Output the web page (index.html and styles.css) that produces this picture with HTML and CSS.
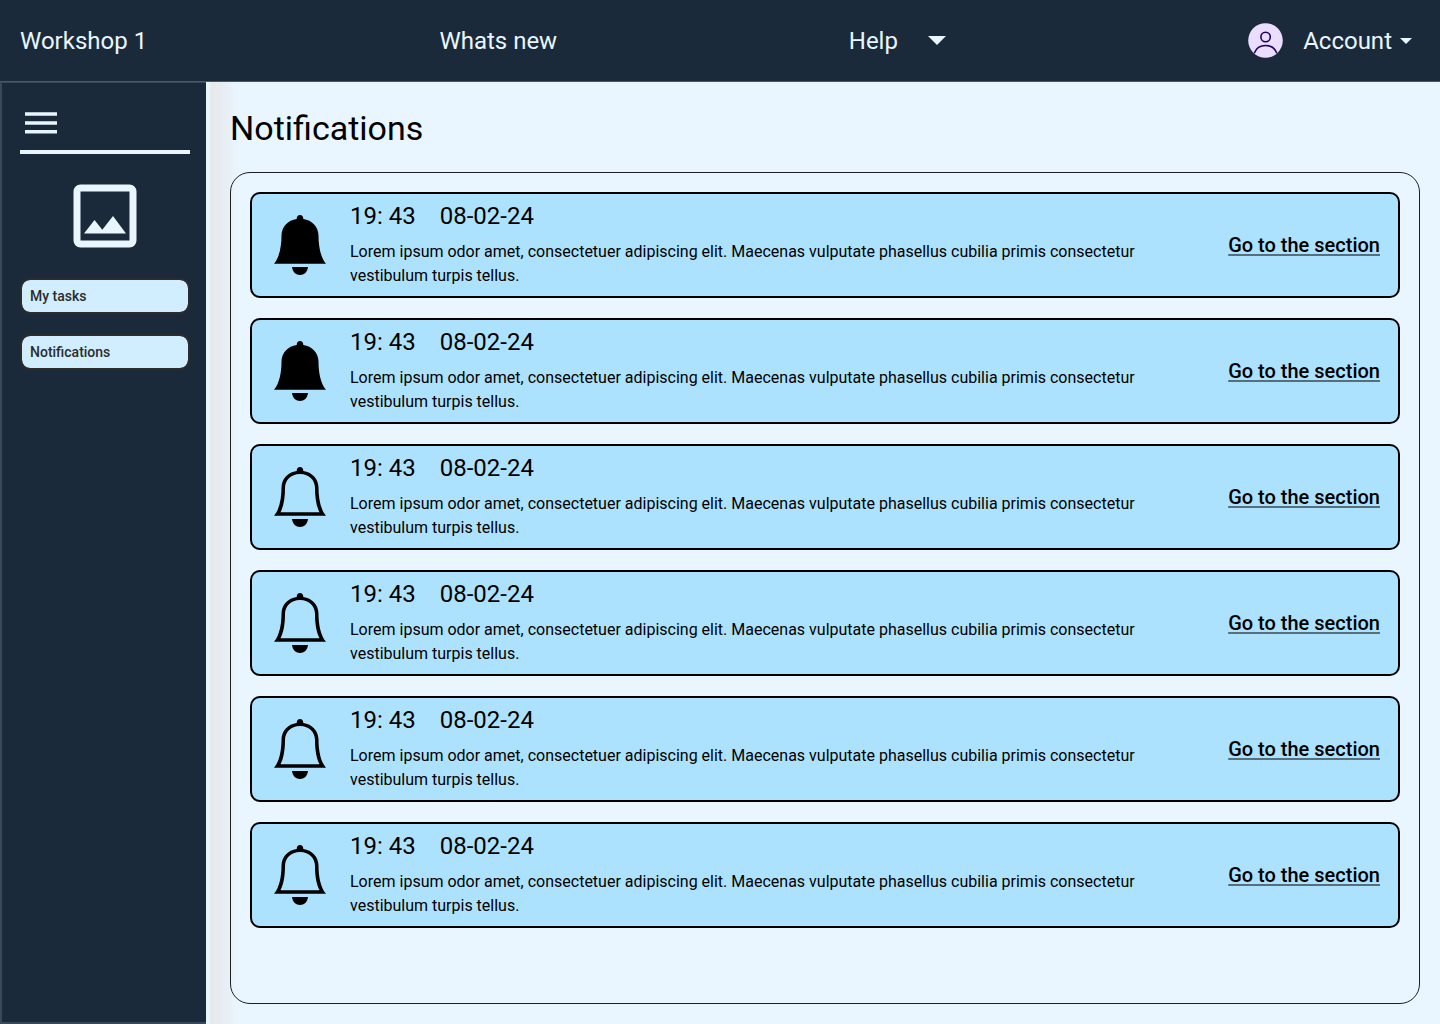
FILE: index.html
```html
<!DOCTYPE html>
<html lang="en">
<head>
<meta charset="utf-8">
<meta name="viewport" content="width=device-width, initial-scale=1">
<title>Notifications</title>
<link rel="stylesheet" href="styles.css">
</head>
<body>
<svg class="sprite" aria-hidden="true">
  <symbol id="bell-solid" viewBox="0 0 52 60">
    <path d="M22.7 4C22.7 1.500 24 0 26 0s3.300 1.500 3.300 4C38 5 44.500 12 44.500 20.500C44.500 31 46.500 42.500 52 48.700H0C5.500 42.500 7.500 31 7.500 20.500C7.500 12 14 5 22.700 4z"/>
    <path d="M18 52h16c-.5 5-4 8-8 8s-7.500-3-8-8z"/>
  </symbol>
  <symbol id="bell-outline" viewBox="0 0 52 60">
    <path fill-rule="evenodd" d="M22.700 4C22.700 1.500 24 0 26 0s3.300 1.500 3.300 4C38 5 44.500 12 44.500 20.500C44.500 31 46.500 42.500 52 48.700H0C5.500 42.500 7.500 31 7.500 20.500C7.500 12 14 5 22.700 4zM26 7C16.500 7 11 13.500 11 21C11 30 9.800 39 6.500 45.200H45.500C42.200 39 41 30 41 21C41 13.500 35.500 7 26 7z"/>
    <path d="M18 52h16c-.5 5-4 8-8 8s-7.500-3-8-8z"/>
  </symbol>
</svg>

<header class="topbar">
  <a class="topbar-link" href="#">Workshop 1</a>
  <a class="topbar-link" href="#">Whats new</a>
  <button class="menu-button help" type="button">Help
    <svg class="caret-large" viewBox="0 0 18 9" aria-hidden="true"><path d="M0 0h18L9 9z"/></svg>
  </button>
  <button class="menu-button account" type="button">
    <svg class="avatar" viewBox="0 0 35 35" aria-hidden="true">
      <circle cx="17.500" cy="17.500" r="17.300" fill="#eaddff"/>
      <g fill="none" stroke="#21005d" stroke-width="1.600">
        <circle cx="17.600" cy="14" r="4.700"/>
        <path d="M6.200 30.300C8 25.500 12.300 22.500 17.500 22.500S27 25.500 28.800 30.300"/>
      </g>
    </svg>
    <span>Account</span>
    <svg class="caret" viewBox="0 0 12 6" aria-hidden="true"><path d="M0 0h12L6 6z"/></svg>
  </button>
</header>

<div class="layout">
  <aside class="sidebar">
    <div class="sidebar-head">
      <button class="hamburger" type="button" aria-label="Toggle menu">
        <svg viewBox="0 0 32 22" aria-hidden="true"><path d="M0 .3h32v3.500H0zM0 9.200h32v3.500H0zM0 18.100h32v3.500H0z"/></svg>
      </button>
    </div>
    <svg class="logo" viewBox="0 0 64 64" aria-hidden="true">
      <path fill-rule="evenodd" d="M7.500 .5h49a7 7 0 0 1 7 7v49a7 7 0 0 1-7 7h-49a7 7 0 0 1-7-7v-49a7 7 0 0 1 7-7zM7.500 7.500v49h49v-49zM11 49.500L21.500 36L29.300 45.800L40 32L53 49.500z"/>
    </svg>
    <nav class="side-nav">
      <a href="#">My tasks</a>
      <a href="#">Notifications</a>
    </nav>
  </aside>

  <main class="content">
    <h1>Notifications</h1>
    <ul class="panel">
      <li class="card">
        <svg class="bell" aria-label="Unread"><use href="#bell-solid"/></svg>
        <div class="card-body">
          <p class="stamp"><span class="time">19: 43</span><span>08-02-24</span></p>
          <p class="message">Lorem ipsum odor amet, consectetuer adipiscing elit. Maecenas vulputate phasellus cubilia primis consectetur vestibulum turpis tellus.</p>
        </div>
        <a class="go" href="#">Go to the section</a>
      </li>
      <li class="card">
        <svg class="bell" aria-label="Unread"><use href="#bell-solid"/></svg>
        <div class="card-body">
          <p class="stamp"><span class="time">19: 43</span><span>08-02-24</span></p>
          <p class="message">Lorem ipsum odor amet, consectetuer adipiscing elit. Maecenas vulputate phasellus cubilia primis consectetur vestibulum turpis tellus.</p>
        </div>
        <a class="go" href="#">Go to the section</a>
      </li>
      <li class="card">
        <svg class="bell" aria-label="Read"><use href="#bell-outline"/></svg>
        <div class="card-body">
          <p class="stamp"><span class="time">19: 43</span><span>08-02-24</span></p>
          <p class="message">Lorem ipsum odor amet, consectetuer adipiscing elit. Maecenas vulputate phasellus cubilia primis consectetur vestibulum turpis tellus.</p>
        </div>
        <a class="go" href="#">Go to the section</a>
      </li>
      <li class="card">
        <svg class="bell" aria-label="Read"><use href="#bell-outline"/></svg>
        <div class="card-body">
          <p class="stamp"><span class="time">19: 43</span><span>08-02-24</span></p>
          <p class="message">Lorem ipsum odor amet, consectetuer adipiscing elit. Maecenas vulputate phasellus cubilia primis consectetur vestibulum turpis tellus.</p>
        </div>
        <a class="go" href="#">Go to the section</a>
      </li>
      <li class="card">
        <svg class="bell" aria-label="Read"><use href="#bell-outline"/></svg>
        <div class="card-body">
          <p class="stamp"><span class="time">19: 43</span><span>08-02-24</span></p>
          <p class="message">Lorem ipsum odor amet, consectetuer adipiscing elit. Maecenas vulputate phasellus cubilia primis consectetur vestibulum turpis tellus.</p>
        </div>
        <a class="go" href="#">Go to the section</a>
      </li>
      <li class="card">
        <svg class="bell" aria-label="Read"><use href="#bell-outline"/></svg>
        <div class="card-body">
          <p class="stamp"><span class="time">19: 43</span><span>08-02-24</span></p>
          <p class="message">Lorem ipsum odor amet, consectetuer adipiscing elit. Maecenas vulputate phasellus cubilia primis consectetur vestibulum turpis tellus.</p>
        </div>
        <a class="go" href="#">Go to the section</a>
      </li>
    </ul>
  </main>
</div>
</body>
</html>
```
FILE: styles.css
```css
* {
  box-sizing: border-box;
}

body {
  margin: 0;
  min-height: 100vh;
  display: flex;
  flex-direction: column;
  background: #e9f6ff;
  color: #000;
  font-family: Roboto, "Liberation Sans", sans-serif;
}

a {
  color: inherit;
}

button {
  padding: 0;
  border: 0;
  background: none;
  color: inherit;
  font: inherit;
  cursor: pointer;
}

.sprite {
  display: none;
}

/* Top bar */
.topbar {
  display: grid;
  grid-template-columns: 42fr 41fr 40fr auto;
  align-items: center;
  height: 82px;
  padding: 0 28px 0 20px;
  border-bottom: 1px solid #4c5866;
  background: #1a2a3a;
  color: #e9f6ff;
  font-size: 24px;
  line-height: 32px;
}

.topbar-link {
  text-decoration: none;
}

.menu-button {
  display: flex;
  align-items: center;
  justify-self: start;
}

.menu-button svg {
  flex: none;
  fill: currentColor;
}

.help {
  gap: 30px;
}

.caret-large {
  width: 18px;
  height: 9px;
}

.avatar {
  width: 35px;
  height: 35px;
  margin-right: 20px;
}

.caret {
  width: 12px;
  height: 6px;
  margin-left: 8px;
}

/* Page columns */
.layout {
  flex: 1;
  display: flex;
}

.sidebar {
  flex: none;
  width: 206px;
  padding: 0 16px 20px 20px;
  background: #1a2a3a;
  color: #e9f6ff;
  box-shadow: inset 2px 0 0 #3b4856, inset 0 1px 0 #3b4856, inset 0 -2px 0 #3b4856;
}

.sidebar-head {
  padding: 30px 5px 16px;
  border-bottom: 4px solid #e9f6ff;
}

.hamburger {
  display: block;
}

.hamburger svg {
  display: block;
  width: 32px;
  height: 22px;
  fill: currentColor;
}

.logo {
  display: block;
  width: 64px;
  height: 64px;
  margin: 30px auto;
  fill: currentColor;
}

.side-nav {
  display: grid;
  gap: 20px;
}

.side-nav a {
  padding: 6px 8px;
  border: 2px solid #2c2c2c;
  border-radius: 10px;
  background: #d0eeff;
  background-clip: padding-box;
  color: #2c2c2c;
  font-size: 14px;
  font-weight: 500;
  line-height: 20px;
  text-decoration: none;
}

.content {
  flex: 1;
  min-width: 0;
  display: flex;
  flex-direction: column;
  padding: 24px 20px 20px 24px;
  background: linear-gradient(90deg, #e9f6ff 4px, #e7e9eb 4px, #e7ebf0 14px, #e9f6ff 32px);
}

h1 {
  margin: 0 0 22px;
  font-size: 34px;
  font-weight: 400;
  line-height: 44px;
}

/* Notification list */
.panel {
  flex: 1;
  display: flex;
  flex-direction: column;
  gap: 20px;
  margin: 0;
  padding: 19px;
  border: 1px solid #1e1e1e;
  border-radius: 20px;
  list-style: none;
}

.card {
  display: flex;
  align-items: center;
  padding: 8px 18px 8px 22px;
  border: 2px solid #000;
  border-radius: 10px;
  background: #ade2ff;
}

.bell {
  flex: none;
  width: 52px;
  height: 60px;
  margin-right: 24px;
}

.card-body {
  flex: 1;
}

.stamp,
.message {
  margin: 0;
}

.stamp {
  display: flex;
  gap: 24px;
  margin-bottom: 10px;
  font-size: 24px;
  line-height: 28px;
}

.message {
  max-width: 800px;
  font-size: 16px;
  line-height: 24px;
}

.go {
  flex: none;
  font-size: 20px;
  font-weight: 500;
  line-height: 24px;
  text-decoration: underline 2px #566f7e;
  text-underline-offset: 2px;
  text-decoration-skip-ink: none;
}
```
